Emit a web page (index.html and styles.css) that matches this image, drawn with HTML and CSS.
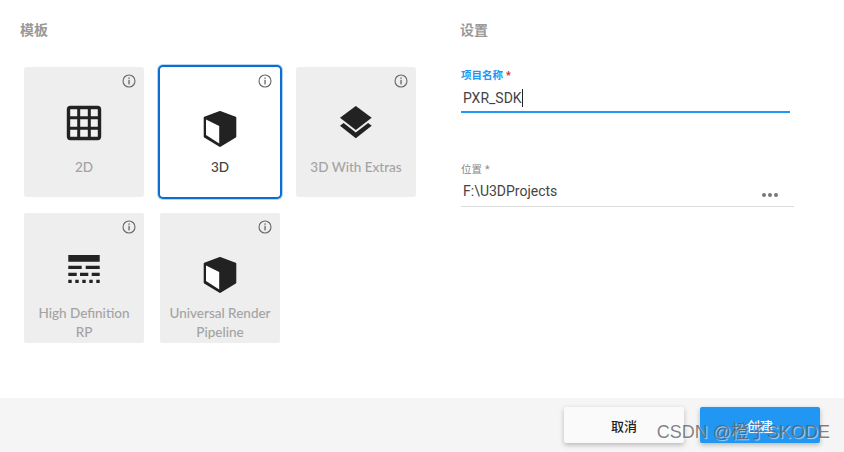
FILE: index.html
```html
<!DOCTYPE html>
<html>

<head>
    <meta charset="utf-8">
    <link rel="stylesheet" href="styles.css">
</head>

<body>
    <svg class="defs" width="0" height="0">
        <symbol id="info" viewBox="0 0 14 14">
            <circle cx="7" cy="7" r="6" fill="none" stroke="#666" stroke-width="1.1"></circle>
            <rect x="6.4" y="3.4" width="1.3" height="1.4" fill="#666"></rect>
            <rect x="6.4" y="5.8" width="1.3" height="4.6" fill="#666"></rect>
        </symbol>
        <symbol id="cube" viewBox="0 0 48 48">
            <path d="M24 13 L39.3 18.6 V37.6 L24 47 L8.7 37.6 V18.6 Z" fill="#222" stroke="#222" stroke-width="2" stroke-linejoin="round"></path>
            <path d="M10 20.5 L23.2 27 V44.5 L10 36 Z" fill="#fff"></path>
        </symbol>
    </svg>

    <div class="content">
        <section class="templates">
            <h3 class="section-title">模板</h3>
            <div class="card-grid">
                <div class="card">
                    <svg class="card-info"><use href="#info"></use></svg>
                    <svg class="card-icon" viewBox="0 0 48 48">
                        <rect x="8.5" y="8.5" width="31" height="31" rx="2" fill="#f2f2f2" stroke="#222" stroke-width="3.4"></rect>
                        <path d="M18.7 8 V40 M29.3 8 V40 M8 18.7 H40 M8 29.3 H40" stroke="#222" stroke-width="3" fill="none"></path>
                    </svg>
                    <div class="card-label">2D</div>
                </div>
                <div class="card selected">
                    <svg class="card-info"><use href="#info"></use></svg>
                    <svg class="card-icon"><use href="#cube"></use></svg>
                    <div class="card-label">3D</div>
                </div>
                <div class="card">
                    <svg class="card-info"><use href="#info"></use></svg>
                    <svg class="card-icon" viewBox="0 0 48 48">
                        <path d="M23.8 7 L39.7 18.8 L23.8 31 L8 18.8 Z" fill="#222"></path>
                        <path d="M8 26.7 L11.6 24 L23.8 33.4 L36.1 24 L39.7 26.7 L23.8 39.3 Z" fill="#222"></path>
                    </svg>
                    <div class="card-label">3D With Extras</div>
                </div>
                <div class="card">
                    <svg class="card-info"><use href="#info"></use></svg>
                    <svg class="card-icon" viewBox="0 0 48 48">
                        <path d="M8.3 10 H39.7 V16.7 H8.3 Z M8.3 20.7 H21.7 V24 H8.3 Z M25.7 20.7 H39.7 V24 H25.7 Z M8.3 27.7 H16.7 V31 H8.3 Z M20 27.7 H28.3 V31 H20 Z M31.7 27.7 H39.7 V31 H31.7 Z M8.3 34.7 H11.7 V38 H8.3 Z M15.3 34.7 H18.7 V38 H15.3 Z M22.3 34.7 H25.7 V38 H22.3 Z M29.3 34.7 H32.7 V38 H29.3 Z M36.3 34.7 H39.7 V38 H36.3 Z" fill="#222"></path>
                    </svg>
                    <div class="card-label">High Definition RP</div>
                </div>
                <div class="card">
                    <svg class="card-info"><use href="#info"></use></svg>
                    <svg class="card-icon"><use href="#cube"></use></svg>
                    <div class="card-label">Universal Render Pipeline</div>
                </div>
            </div>
        </section>

        <section class="settings">
            <h3 class="section-title">设置</h3>
            <div class="field active">
                <label class="field-label">项目名称<span class="required">*</span></label>
                <div class="field-value">PXR_SDK<span class="caret"></span></div>
            </div>
            <div class="field path">
                <label class="field-label">位置<span class="required">*</span></label>
                <div class="field-value">F:\U3DProjects<span class="dots"><i></i><i></i><i></i></span></div>
            </div>
        </section>
    </div>

    <div class="footer">
        <button class="btn">取消</button>
        <button class="btn primary">创建</button>
        <div class="watermark">CSDN @橙子SKODE</div>
    </div>
</body>

</html>
```

FILE: styles.css
```css
* {
    box-sizing: border-box;
}

html,
body {
    margin: 0;
    height: 100%;
    overflow: hidden;
}

body {
    display: flex;
    flex-direction: column;
    background-color: #fff;
    font-family: Roboto, "Noto Sans CJK SC", sans-serif;
}

.defs {
    display: none;
}

.content {
    flex: 1;
    display: flex;
}

.section-title {
    margin: 0;
    font-size: 14px;
    line-height: 16px;
    font-weight: 700;
    color: #999;
}

/* Template cards */
.templates {
    width: 440px;
    padding: 22px 0 0 20px;
}

.card-grid {
    display: grid;
    grid-template-columns: repeat(3, 120px);
    grid-auto-rows: 130px;
    gap: 16px;
    margin: 29px 0 0 4px;
}

.card {
    position: relative;
    padding-top: 32px;
    background-color: #eee;
    border-radius: 2px;
    text-align: center;
}

.card.selected {
    background-color: #fff;
    border-radius: 3px;
    box-shadow: 0 0 0 2px #0b6ed0, 0 0 0 3px #b5d5f3;
}

.card-info {
    position: absolute;
    top: 7px;
    right: 8px;
    width: 14px;
    height: 14px;
}

.card-icon {
    display: block;
    width: 48px;
    height: 48px;
    margin: 0 auto;
}

.card-label {
    margin-top: 11px;
    padding: 0 6px;
    font-family: Lato, sans-serif;
    font-size: 13.5px;
    font-weight: 500;
    line-height: 19px;
    color: #a3a3a3;
}

.selected .card-label {
    color: #444;
}

/* Settings form */
.settings {
    flex: 1;
    padding: 22px 0 0 20px;
}

.field {
    margin-left: 1px;
}

.field.active {
    width: 329px;
    height: 44px;
    margin-top: 31px;
    border-bottom: 2px solid #2196f3;
}

.field.path {
    position: relative;
    width: 333px;
    height: 44px;
    margin-top: 50px;
    border-bottom: 1px solid #ddd;
}

.field-label {
    display: block;
    font-size: 10.5px;
    line-height: 14px;
    color: #888;
}

.active .field-label {
    color: #2196f3;
    font-weight: 700;
}

.required {
    margin-left: 3px;
}

.active .required {
    color: #c62828;
}

.field-value {
    display: flex;
    align-items: center;
    height: 22px;
    padding-left: 2px;
    margin-top: 3px;
    font-size: 14px;
    color: #444;
}

.active .field-value {
    margin-top: 4px;
}

.caret {
    width: 1px;
    height: 18px;
    background-color: #222;
}

.dots {
    position: absolute;
    right: 16px;
    bottom: 9px;
    display: flex;
    gap: 2px;
}

.dots i {
    width: 4px;
    height: 4px;
    border-radius: 50%;
    background-color: #777;
}

/* Footer */
.footer {
    position: relative;
    height: 54px;
    display: flex;
    justify-content: flex-end;
    align-items: center;
    gap: 16px;
    padding-right: 24px;
    background-color: #f5f5f5;
}

.btn {
    width: 120px;
    height: 36px;
    border: none;
    border-radius: 2px;
    background-color: #fafafa;
    box-shadow: 0 2px 5px rgba(0, 0, 0, 0.25);
    font-family: "Noto Sans CJK SC", sans-serif;
    font-size: 13px;
    font-weight: 500;
    color: #222;
}

.btn.primary {
    background-color: #2196f3;
    color: #fff;
}

.watermark {
    position: absolute;
    right: 14px;
    top: 22px;
    font-family: "Liberation Sans", "Noto Sans CJK SC", sans-serif;
    font-size: 18px;
    line-height: 24px;
    white-space: nowrap;
    color: rgba(90, 90, 90, 0.75);
    text-shadow: 1px 1px 1px rgba(255, 255, 255, 0.6);
}
```
